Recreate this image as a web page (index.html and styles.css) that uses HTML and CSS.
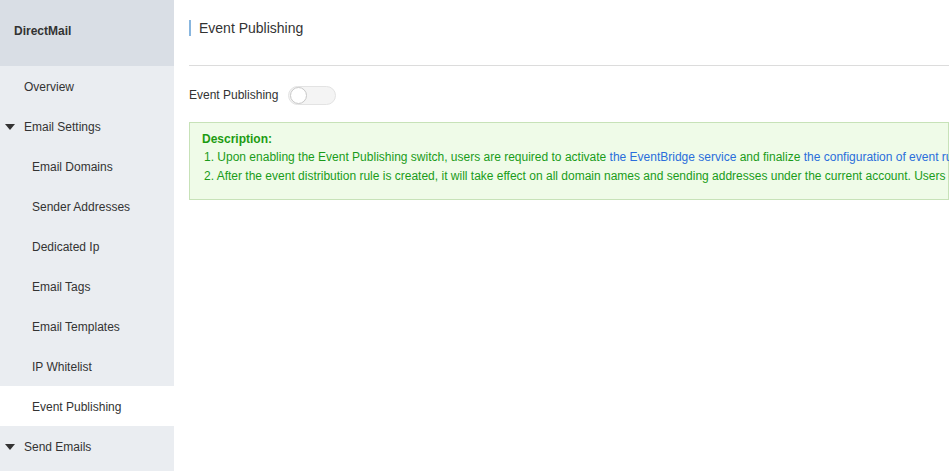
FILE: index.html
```html
<!DOCTYPE html>
<html lang="en">
<head>
  <meta charset="UTF-8" />
  <title>DirectMail - Event Publishing</title>
  <link rel="stylesheet" href="styles.css">
</head>
<body>
  <aside class="sidebar">
    <div class="brand">DirectMail</div>
    <ul class="nav">
      <li class="item">Overview</li>
      <li class="item group"><span class="caret"></span>Email Settings</li>
      <li class="item sub">Email Domains</li>
      <li class="item sub">Sender Addresses</li>
      <li class="item sub">Dedicated Ip</li>
      <li class="item sub">Email Tags</li>
      <li class="item sub">Email Templates</li>
      <li class="item sub">IP Whitelist</li>
      <li class="item sub active">Event Publishing</li>
      <li class="item group"><span class="caret"></span>Send Emails</li>
    </ul>
  </aside>

  <main class="content">
    <div class="page-head">
      <h1 class="title">Event Publishing</h1>
    </div>
    <div class="switch-row">
      <span class="label">Event Publishing</span>
      <button class="switch"><span class="thumb"></span></button>
    </div>
    <div class="notice">
      <p class="notice-title">Description:</p>
      <p class="line">1. Upon enabling the Event Publishing switch, users are required to activate <a href="#">the EventBridge service</a> and finalize <a href="#">the configuration of event rules</a> in order to receive the published events.</p>
      <p class="line">2. After the event distribution rule is created, it will take effect on all domain names and sending addresses under the current account. Users can filter events through the rules.</p>
    </div>
  </main>
</body>
</html>
```

FILE: styles.css
```css
* {
  margin: 0;
  padding: 0;
  box-sizing: border-box;
}
body {
  display: flex;
  height: 471px;
  overflow: hidden;
  font-family: "Liberation Sans", Arial, sans-serif;
  font-size: 12px;
  color: #333;
  background: #fff;
}
.sidebar {
  width: 174px;
  flex-shrink: 0;
  background: #eaedf1;
}
.brand {
  height: 66px;
  line-height: 62px;
  padding-left: 14px;
  font-weight: bold;
  font-size: 12px;
  color: #333;
  background: #d9dee5;
}
.nav {
  list-style: none;
}
.item {
  height: 40px;
  line-height: 40px;
  padding-top: 1px;
  padding-left: 24px;
  color: #333;
}
.item.sub {
  padding-left: 32px;
}
.item.group {
  padding-left: 5px;
  display: flex;
  align-items: center;
}
.item.active {
  background: #fff;
}
.caret {
  width: 0;
  height: 0;
  border-left: 5px solid transparent;
  border-right: 5px solid transparent;
  border-top: 6px solid #333;
  margin-right: 9px;
}
.content {
  flex: 1;
  min-width: 0;
  padding: 0 0 0 189px;
  margin-left: -174px;
  overflow: hidden;
}
.page-head {
  height: 66px;
  border-bottom: 1px solid #dcdcdc;
  padding-top: 20px;
}
.title {
  font-size: 14px;
  font-weight: normal;
  color: #333;
  border-left: 2px solid #88b6df;
  padding-left: 8px;
  line-height: 16px;
}
.switch-row {
  display: flex;
  align-items: center;
  height: 56px;
  padding-top: 2px;
}
.label {
  margin-right: 10px;
}
.switch {
  width: 48px;
  height: 19px;
  border: 1px solid #e3e3e3;
  border-radius: 10px;
  background: #f4f4f4;
  position: relative;
}
.thumb {
  position: absolute;
  left: 1px;
  top: 0;
  width: 17px;
  height: 17px;
  border-radius: 50%;
  background: #fff;
  border: 1px solid #c8c8c8;
}
.notice {
  border: 1px solid #c7e2b8;
  background: #effbe8;
  padding: 9px 0 12px 12px;
  white-space: nowrap;
  color: #1a9b1a;
  height: 78px;
}
.notice-title {
  font-weight: bold;
  font-size: 12px;
  line-height: 15px;
  margin-bottom: 1px;
  color: #1d9b12;
}
.line {
  line-height: 19px;
  padding-left: 2px;
}
.line a {
  color: #2a6edb;
  text-decoration: none;
}
```
